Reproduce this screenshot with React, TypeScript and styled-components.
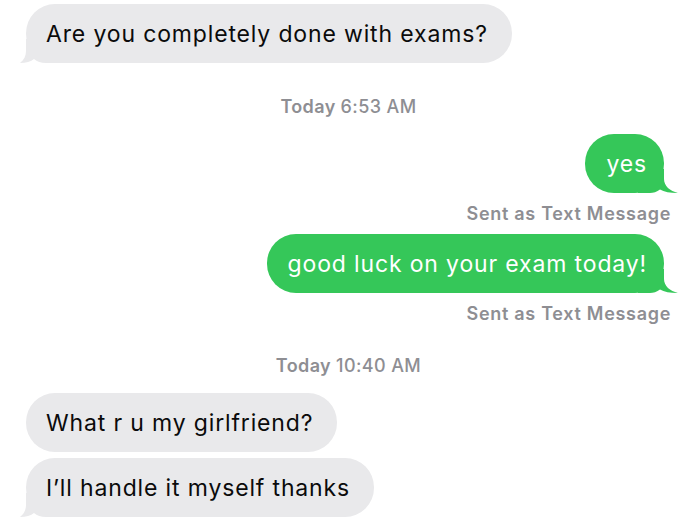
import React from "react";
import styled, { createGlobalStyle } from "styled-components";

const GlobalStyle = createGlobalStyle`
  html, body {
    margin: 0;
    padding: 0;
    background: #ffffff;
  }
  body {
    font-family: Inter, "Liberation Sans", Arial, sans-serif;
    -webkit-font-smoothing: antialiased;
  }
`;

const GRAY = "#e9e9eb";
const GREEN = "#35c759";

const Thread = styled.div`
  width: 700px;
  height: 527px;
  overflow: hidden;
  box-sizing: border-box;
  padding: 4px 36px 0 26px;
  display: flex;
  flex-direction: column;
`;

const Row = styled.div<{ $side: "left" | "right"; $gap: number }>`
  display: flex;
  justify-content: ${(p) => (p.$side === "right" ? "flex-end" : "flex-start")};
  margin-top: ${(p) => p.$gap}px;
`;

const Bubble = styled.div<{ $sent?: boolean }>`
  position: relative;
  box-sizing: border-box;
  height: 59px;
  padding: ${(p) => (p.$sent ? "0 17px 0 21px" : "0 24px 0 20px")};
  display: flex;
  align-items: center;
  border-radius: 29px;
  background: ${(p) => (p.$sent ? GREEN : GRAY)};
  color: ${(p) => (p.$sent ? "#ffffff" : "#0b0b0b")};
  font-size: 23px;
  letter-spacing: 0.85px;
  white-space: nowrap;
`;

const Text = styled.span`
  position: relative;
`;

const TailSvg = styled.svg<{ $sent?: boolean }>`
  position: absolute;
  bottom: 0;
  height: 24px;
  ${(p) =>
    p.$sent
      ? "width: 40px; right: -14px; transform: scaleX(-1);"
      : "width: 34px; left: -6px;"}
`;

const Stamp = styled.div<{ $gap: number }>`
  margin-top: ${(p) => p.$gap}px;
  margin-left: 7px;
  text-align: center;
  font-size: 18px;
  line-height: 20px;
  font-weight: 600;
  letter-spacing: 0.4px;
  color: #8e8e93;
`;

const Time = styled.span`
  font-weight: 500;
`;

const Note = styled.div<{ $gap: number }>`
  margin-top: ${(p) => p.$gap}px;
  margin-right: -7px;
  text-align: right;
  font-size: 18px;
  line-height: 20px;
  font-weight: 600;
  letter-spacing: 0.7px;
  color: #8e8e93;
`;

function Tail({ sent }: { sent?: boolean }) {
  return sent ? (
    <TailSvg $sent viewBox="0 0 40 24">
      <path
        d="M14 0 L14 10 C14 17 8 22 0 24 C8 24 14 23 18 20.5 C21 23 25 24 28 24 L40 24 L40 0 Z"
        fill={GREEN}
      />
    </TailSvg>
  ) : (
    <TailSvg viewBox="0 0 34 24">
      <path
        d="M6 0 L6 12 C6 17 4 21 0 24 C6 24 11 22.5 14 20 C17 22.5 21 24 26 24 L34 24 L34 0 Z"
        fill={GRAY}
      />
    </TailSvg>
  );
}

type Msg = {
  text: string;
  sent?: boolean;
  tail?: boolean;
  gap: number;
};

function Message({ text, sent, tail, gap }: Msg) {
  return (
    <Row $side={sent ? "right" : "left"} $gap={gap}>
      <Bubble $sent={sent}>
        {tail && <Tail sent={sent} />}
        <Text>{text}</Text>
      </Bubble>
    </Row>
  );
}

export default function App() {
  return (
    <>
      <GlobalStyle />
      <Thread>
        <Message text="Are you completely done with exams?" tail gap={0} />
        <Stamp $gap={34}>
          Today <Time>6:53 AM</Time>
        </Stamp>
        <Message text="yes" sent tail gap={17} />
        <Note $gap={11}>Sent as Text Message</Note>
        <Message text="good luck on your exam today!" sent tail gap={10} />
        <Note $gap={11}>Sent as Text Message</Note>
        <Stamp $gap={32}>
          Today <Time>10:40 AM</Time>
        </Stamp>
        <Message text="What r u my girlfriend?" gap={17} />
        <Message text="I’ll handle it myself thanks" tail gap={6} />
      </Thread>
    </>
  );
}
